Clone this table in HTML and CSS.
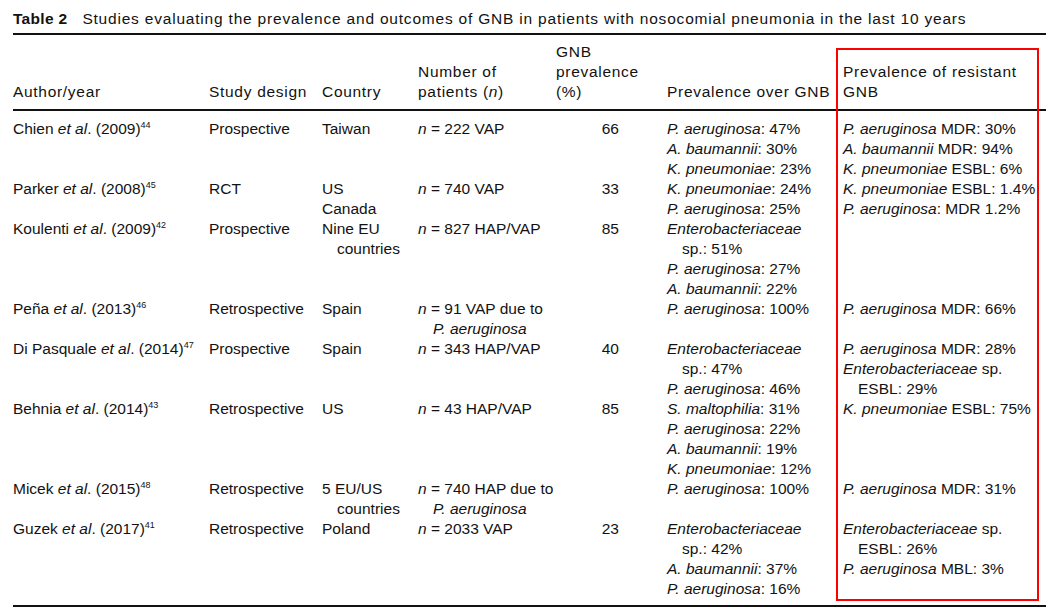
FILE: index.html
```html
<!DOCTYPE html>
<html lang="en">
<head>
<meta charset="utf-8">
<title>Table 2</title>
<link rel="stylesheet" href="styles.css">
</head>
<body>
<div class="page">
  <div class="caption"><b class="label">Table 2</b>Studies evaluating the prevalence and outcomes of GNB in patients with nosocomial pneumonia in the last 10 years</div>
  <table class="data">
    <colgroup>
      <col class="c1"><col class="c2"><col class="c3"><col class="c4"><col class="c5"><col class="c6"><col class="c7">
    </colgroup>
    <thead>
      <tr>
        <th>Author/year</th>
        <th>Study design</th>
        <th>Country</th>
        <th>Number of<br>patients (<i>n</i>)</th>
        <th>GNB<br>prevalence<br>(%)</th>
        <th>Prevalence over GNB</th>
        <th>Prevalence of resistant<br>GNB</th>
      </tr>
    </thead>
    <tbody>
      <tr>
        <td>Chien <i>et al</i>. (2009)<sup>44</sup></td>
        <td>Prospective</td>
        <td>Taiwan</td>
        <td><i>n</i> = 222 VAP</td>
        <td class="num">66</td>
        <td><div class="hi"><i>P. aeruginosa</i>: 47%</div><div class="hi"><i>A. baumannii</i>: 30%</div><div class="hi"><i>K. pneumoniae</i>: 23%</div></td>
        <td><div class="hi"><i>P. aeruginosa</i> MDR: 30%</div><div class="hi"><i>A. baumannii</i> MDR: 94%</div><div class="hi"><i>K. pneumoniae</i> ESBL: 6%</div></td>
      </tr>
      <tr>
        <td>Parker <i>et al</i>. (2008)<sup>45</sup></td>
        <td>RCT</td>
        <td>US<br>Canada</td>
        <td><i>n</i> = 740 VAP</td>
        <td class="num">33</td>
        <td><div class="hi"><i>K. pneumoniae</i>: 24%</div><div class="hi"><i>P. aeruginosa</i>: 25%</div></td>
        <td><div class="hi"><i>K. pneumoniae</i> ESBL: 1.4%</div><div class="hi"><i>P. aeruginosa</i>: MDR 1.2%</div></td>
      </tr>
      <tr>
        <td>Koulenti <i>et al</i>. (2009)<sup>42</sup></td>
        <td>Prospective</td>
        <td><div class="hi">Nine EU<br>countries</div></td>
        <td><i>n</i> = 827 HAP/VAP</td>
        <td class="num">85</td>
        <td><div class="hi"><i>Enterobacteriaceae</i><br>sp.: 51%</div><div class="hi"><i>P. aeruginosa</i>: 27%</div><div class="hi"><i>A. baumannii</i>: 22%</div></td>
        <td></td>
      </tr>
      <tr>
        <td>Peña <i>et al</i>. (2013)<sup>46</sup></td>
        <td>Retrospective</td>
        <td>Spain</td>
        <td><div class="hi"><i>n</i> = 91 VAP due to<br><i>P. aeruginosa</i></div></td>
        <td class="num"></td>
        <td><div class="hi"><i>P. aeruginosa</i>: 100%</div></td>
        <td><div class="hi"><i>P. aeruginosa</i> MDR: 66%</div></td>
      </tr>
      <tr>
        <td>Di Pasquale <i>et al</i>. (2014)<sup>47</sup></td>
        <td>Prospective</td>
        <td>Spain</td>
        <td><i>n</i> = 343 HAP/VAP</td>
        <td class="num">40</td>
        <td><div class="hi"><i>Enterobacteriaceae</i><br>sp.: 47%</div><div class="hi"><i>P. aeruginosa</i>: 46%</div></td>
        <td><div class="hi"><i>P. aeruginosa</i> MDR: 28%</div><div class="hi"><i>Enterobacteriaceae</i> sp.<br>ESBL: 29%</div></td>
      </tr>
      <tr>
        <td>Behnia <i>et al</i>. (2014)<sup>43</sup></td>
        <td>Retrospective</td>
        <td>US</td>
        <td><i>n</i> = 43 HAP/VAP</td>
        <td class="num">85</td>
        <td><div class="hi"><i>S. maltophilia</i>: 31%</div><div class="hi"><i>P. aeruginosa</i>: 22%</div><div class="hi"><i>A. baumannii</i>: 19%</div><div class="hi"><i>K. pneumoniae</i>: 12%</div></td>
        <td><div class="hi"><i>K. pneumoniae</i> ESBL: 75%</div></td>
      </tr>
      <tr>
        <td>Micek <i>et al</i>. (2015)<sup>48</sup></td>
        <td>Retrospective</td>
        <td><div class="hi">5 EU/US<br>countries</div></td>
        <td><div class="hi"><i>n</i> = 740 HAP due to<br><i>P. aeruginosa</i></div></td>
        <td class="num"></td>
        <td><div class="hi"><i>P. aeruginosa</i>: 100%</div></td>
        <td><div class="hi"><i>P. aeruginosa</i> MDR: 31%</div></td>
      </tr>
      <tr>
        <td>Guzek <i>et al</i>. (2017)<sup>41</sup></td>
        <td>Retrospective</td>
        <td>Poland</td>
        <td><i>n</i> = 2033 VAP</td>
        <td class="num">23</td>
        <td><div class="hi"><i>Enterobacteriaceae</i><br>sp.: 42%</div><div class="hi"><i>A. baumannii</i>: 37%</div><div class="hi"><i>P. aeruginosa</i>: 16%</div></td>
        <td><div class="hi"><i>Enterobacteriaceae</i> sp.<br>ESBL: 26%</div><div class="hi"><i>P. aeruginosa</i> MBL: 3%</div></td>
      </tr>
    </tbody>
  </table>
  <div class="highlight"></div>
</div>
</body>
</html>
```

FILE: styles.css
```css
html, body {
  margin: 0;
  padding: 0;
  background: #ffffff;
}

body {
  color: #121212;
  font-family: "Liberation Sans", Arial, sans-serif;
  font-size: 15.5px;
  line-height: 20px;
}

.page {
  position: relative;
  padding-left: 13px;
  width: 1033px;
}

.caption {
  padding: 9px 0 4px;
  white-space: nowrap;
  letter-spacing: 0.8px;
}

.label {
  font-weight: bold;
  letter-spacing: 0.3px;
  margin-right: 15px;
}

.data {
  border-collapse: collapse;
  table-layout: fixed;
  width: 1033px;
  border-top: 2px solid #111;
  border-bottom: 2px solid #111;
}

.c1 { width: 196px; }
.c2 { width: 113px; }
.c3 { width: 96px; }
.c4 { width: 138px; }
.c5 { width: 111px; }
.c6 { width: 176px; }
.c7 { width: 203px; }

.data th {
  font-weight: normal;
  text-align: left;
  vertical-align: bottom;
  padding: 7px 0;
  border-bottom: 2px solid #111;
  white-space: nowrap;
  letter-spacing: 0.7px;
}

.data td {
  vertical-align: top;
  padding: 0;
  white-space: nowrap;
}

.data tbody tr:first-child td {
  padding-top: 8px;
}

.data tbody tr:last-child td {
  padding-bottom: 6px;
}

.data td.num {
  text-align: right;
  padding-right: 48px;
}

.hi {
  padding-left: 15px;
  text-indent: -15px;
}

sup {
  font-size: 9px;
  line-height: 0;
  vertical-align: 6px;
}

.highlight {
  position: absolute;
  left: 836px;
  top: 48px;
  width: 199px;
  height: 549px;
  border: 2px solid #f00;
  pointer-events: none;
}
```
